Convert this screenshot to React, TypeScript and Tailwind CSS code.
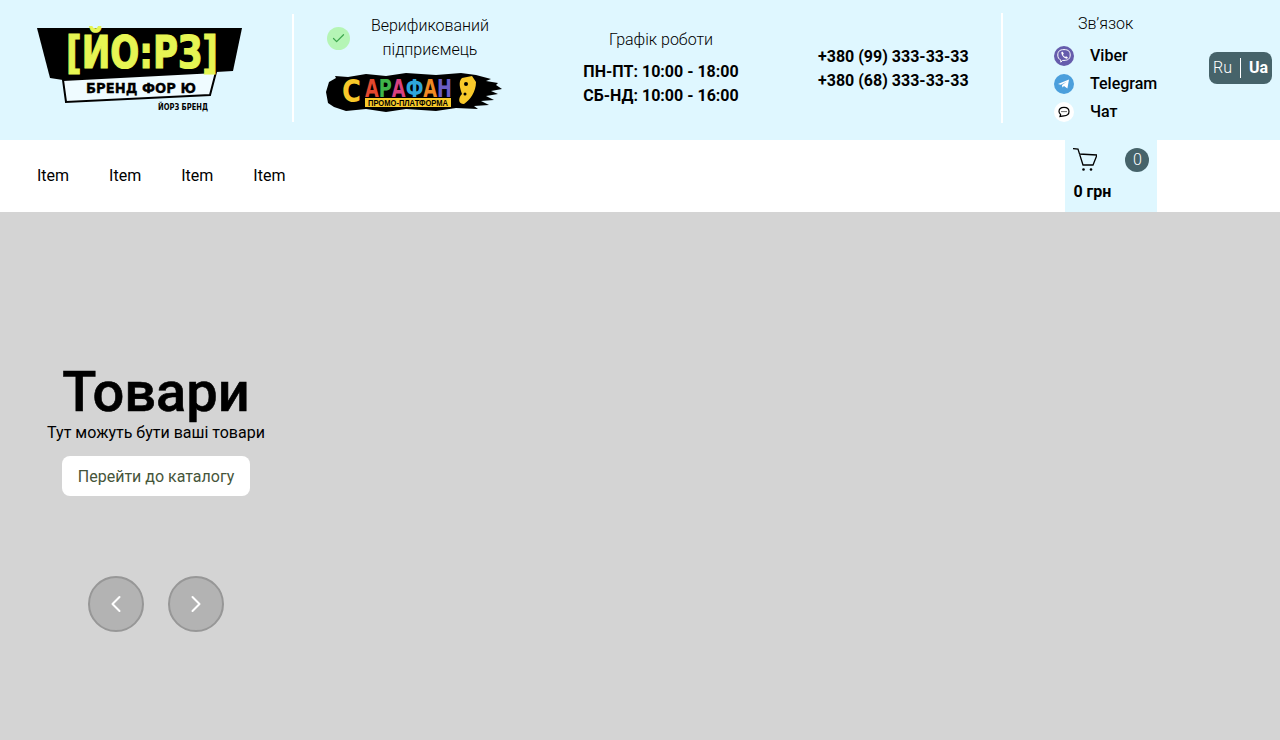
import React from 'react';
import { ChevronLeft, ChevronRight, Check } from 'lucide-react';

const navItems = ['Item', 'Item', 'Item', 'Item'];

function Logo() {
  return (
    <svg width="206" height="100" viewBox="0 0 206 100" className="shrink-0 overflow-visible">
      <polygon points="0,8 205,8 196,51 179,52 26,60 13,58" fill="#000" />
      <polygon points="26,60 179,52 173,75 29,82" fill="#effbff" stroke="#000" strokeWidth="2" />
      <text x="105" y="48" textAnchor="middle" fontFamily="'DejaVu Sans', sans-serif" fontWeight="700" fontSize="45" fill="#e6f553" stroke="#e6f553" strokeWidth="1.2" textLength="152" lengthAdjust="spacingAndGlyphs">[ЙО:РЗ]</text>
      <text x="104" y="73" textAnchor="middle" fontFamily="'DejaVu Sans', sans-serif" fontWeight="700" fontSize="14" fill="#000" stroke="#000" strokeWidth="0.3" textLength="110" lengthAdjust="spacingAndGlyphs">БРЕНД ФОР Ю</text>
      <text x="146" y="90" textAnchor="middle" fontFamily="'DejaVu Sans', sans-serif" fontWeight="700" fontSize="8" fill="#000" textLength="50" lengthAdjust="spacingAndGlyphs">ЙОРЗ БРЕНД</text>
    </svg>
  );
}

function Sarafan() {
  return (
    <svg width="176" height="44" viewBox="0 0 176 44" className="block">
      <path d="M3 12 L10 8 L9 6 L22 7 L40 4 L60 6 L80 3 L110 5 L135 3 L150 5 L165 9 L160 11 L172 13 L170 15 L176 19 L165 21 L172 24 L160 26 L168 30 L155 31 L163 35 L148 36 L152 39 L130 38 L110 41 L80 39 L60 42 L40 39 L20 41 L8 37 L2 33 L0 22 Z" fill="#000" />
      <text x="16" y="32" fontFamily="'DejaVu Sans', sans-serif" fontWeight="700" fontSize="32" fill="#f8c92a" textLength="19" lengthAdjust="spacingAndGlyphs">С</text>
      <text x="39" y="27" fontFamily="'DejaVu Sans', sans-serif" fontWeight="700" fontSize="24" textLength="87" lengthAdjust="spacingAndGlyphs">
        <tspan fill="#e4492f">А</tspan>
        <tspan fill="#3fb54a">Р</tspan>
        <tspan fill="#d9417f">А</tspan>
        <tspan fill="#2ea6dc">Ф</tspan>
        <tspan fill="#f08a24">А</tspan>
        <tspan fill="#6a5cc4">Н</tspan>
      </text>
      <rect x="39" y="28" width="86" height="9" fill="#f8c92a" />
      <text x="82" y="36" textAnchor="middle" fontFamily="'Liberation Sans', sans-serif" fontWeight="700" fontSize="9" fill="#000" textLength="80" lengthAdjust="spacingAndGlyphs">ПРОМО-ПЛАТФОРМА</text>
      <path d="M136 8 L146 6 L150 12 C150 22 144 30 138 34 C132 34 132 28 136 24 C134 18 132 12 136 8 Z" fill="#f8c92a" />
      <circle cx="140" cy="14" r="2" fill="#000" />
      <circle cx="139" cy="24" r="1.5" fill="#000" />
    </svg>
  );
}

function ViberIcon() {
  return (
    <svg width="20" height="20" viewBox="0 0 20 20">
      <circle cx="10" cy="10" r="10" fill="#665cac" />
      <path d="M10 3.6 C14.4 3.6 16.2 5.4 16.2 9 C16.2 12.8 13.8 14.4 10 14.4 L8.6 14.4 L6.8 16.2 L6.8 14 C4.8 13.2 3.8 11.6 3.8 9 C3.8 5.4 5.6 3.6 10 3.6 Z" fill="none" stroke="#fff" strokeWidth="1" />
      <path d="M7.4 6 L8.8 5.8 L9.8 7.8 L9 8.8 C9.4 9.8 10.2 10.6 11.2 11 L12 10.2 L13.8 11.2 L13.4 12.6 C11 13.2 6.8 9.4 7.4 6 Z" fill="#fff" />
    </svg>
  );
}

function TelegramIcon() {
  return (
    <svg width="20" height="20" viewBox="0 0 20 20">
      <circle cx="10" cy="10" r="10" fill="#4b9fdc" />
      <path d="M4 10 L15 5.6 L13.4 14.4 L10 12 L8.4 13.6 L8 11 L13 7.4 L6.8 10.8 Z" fill="#fff" />
    </svg>
  );
}

function ChatIcon() {
  return (
    <svg width="20" height="20" viewBox="0 0 20 20">
      <circle cx="10" cy="10" r="10" fill="#fff" />
      <path d="M10 5.4 C13 5.4 15 7.2 15 9.6 C15 12 13 13.8 10 13.8 L6 14.4 L6.6 12.4 C5.6 11.6 5 10.6 5 9.6 C5 7.2 7 5.4 10 5.4 Z" fill="none" stroke="#000" strokeWidth="1.2" />
      <circle cx="8" cy="9.6" r="0.7" fill="#000" />
      <circle cx="10" cy="9.6" r="0.7" fill="#000" />
      <circle cx="12" cy="9.6" r="0.7" fill="#000" />
    </svg>
  );
}

function CartIcon() {
  return (
    <svg width="24" height="24" viewBox="0 0 24 24" fill="none" stroke="#000" strokeWidth="1.3">
      <path d="M0 0.6 L5 1 L10 17 L20 17 L24 7 L6 6" />
      <circle cx="10.5" cy="21.5" r="1.3" fill="#000" stroke="none" />
      <circle cx="18" cy="21.5" r="1.3" fill="#000" stroke="none" />
    </svg>
  );
}

export default function App() {
  return (
    <div className="h-[740px] overflow-hidden bg-[#d4d4d4] font-['Roboto',sans-serif] text-black">
      <header className="h-[140px] bg-[#dff7ff] flex items-center">
        <div className="w-[292px] pl-[37px] shrink-0">
          <Logo />
        </div>
        <div className="w-[2px] h-[108px] mb-[4px] bg-white shrink-0" />
        <div className="w-[176px] ml-[33px] shrink-0 self-start pt-[14px]">
          <div className="flex items-center">
            <div className="w-[23px] h-[23px] rounded-full bg-[#b5f5b5] flex items-center justify-center shrink-0">
              <Check className="w-[15px] h-[15px] text-[#3fa84f]" strokeWidth={2} />
            </div>
            <p className="flex-1 text-center text-base leading-[24px] font-light pl-[7px]">Верификований<br />підприємець</p>
          </div>
          <div className="mt-[8px] -ml-px">
            <Sarafan />
          </div>
        </div>
        <div className="w-[160px] ml-[78px] pb-[4px] shrink-0 flex flex-col items-center">
          <p className="text-base font-light leading-6 mb-[8px]">Графік роботи</p>
          <p className="text-base font-bold leading-6 text-center whitespace-nowrap">ПН-ПТ: 10:00 - 18:00<br />СБ-НД: 10:00 - 16:00</p>
        </div>
        <div className="ml-[77px] w-[183px] pb-[2px] shrink-0 text-base font-bold leading-6 whitespace-nowrap">
          <p>+380 (99) 333-33-33</p>
          <p>+380 (68) 333-33-33</p>
        </div>
        <div className="w-[2px] h-[110px] mb-[4px] bg-white shrink-0" />
        <div className="ml-[51px] w-[155px] shrink-0 self-stretch pt-[12px]">
          <p className="text-base font-light leading-6 pl-[24px]">Зв’язок</p>
          <div className="mt-[10px] flex flex-col gap-[8px]">
            <div className="flex items-center gap-[16px] h-[20px] text-base font-medium"><ViberIcon />Viber</div>
            <div className="flex items-center gap-[16px] h-[20px] text-base font-medium"><TelegramIcon />Telegram</div>
            <div className="flex items-center gap-[16px] h-[20px] text-base font-medium"><ChatIcon />Чат</div>
          </div>
        </div>
        <div className="w-[63px] h-[32px] mb-[4px] rounded-[8px] bg-[#46636a] text-white flex items-center justify-center text-base shrink-0">
          <span className="font-light">Ru</span>
          <span className="w-px h-[20px] bg-white mx-[8px]" />
          <span className="font-bold">Ua</span>
        </div>
      </header>
      <nav className="h-[72px] bg-white flex items-center pl-[37px]">
        <div className="flex gap-[40px] text-base">
          {navItems.map((item, i) => (
            <a key={i} href="#">{item}</a>
          ))}
        </div>
        <div className="ml-[780px] w-[92px] h-[72px] bg-[#dff7ff] px-[8px] pt-[8px]">
          <div className="flex justify-between items-center">
            <CartIcon />
            <span className="w-[24px] h-[24px] rounded-full bg-[#46636a] text-white font-light text-base flex items-center justify-center">0</span>
          </div>
          <p className="text-base font-bold leading-6 mt-[8px]">0 грн</p>
        </div>
      </nav>
      <section className="w-[312px] flex flex-col items-center pt-[147px]">
        <h1 className="text-[56px] font-medium leading-[66px] [-webkit-text-stroke:0.6px_#000]">Товари</h1>
        <p className="text-base leading-[20px] -mt-[2px]">Тут можуть бути ваші товари</p>
        <button className="mt-[13px] h-[40px] px-4 pt-[1px] bg-white rounded-[8px] text-base text-[#46553a]">Перейти до каталогу</button>
        <div className="mt-[80px] flex gap-[24px]">
          <button className="w-[56px] h-[56px] rounded-full bg-[#b3b3b3] border-2 border-[#979797] flex items-center justify-center text-white">
            <ChevronLeft className="w-[28px] h-[28px]" strokeWidth={1.75} />
          </button>
          <button className="w-[56px] h-[56px] rounded-full bg-[#b3b3b3] border-2 border-[#979797] flex items-center justify-center text-white">
            <ChevronRight className="w-[28px] h-[28px]" strokeWidth={1.75} />
          </button>
        </div>
      </section>
    </div>
  );
}
